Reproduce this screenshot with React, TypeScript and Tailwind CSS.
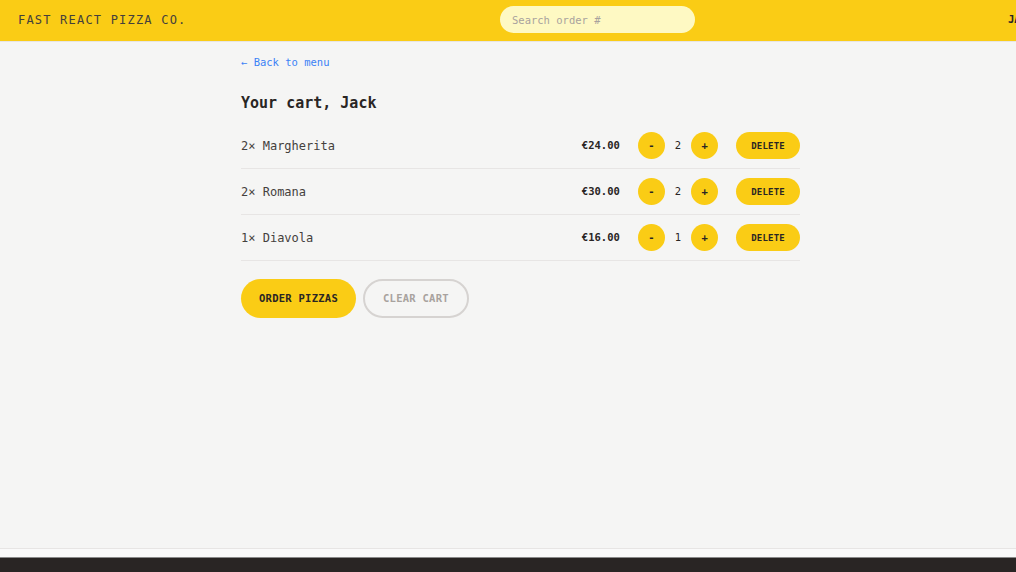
import React from 'react';

const cart = [
  { id: 1, name: 'Margherita', quantity: 2, price: 24 },
  { id: 2, name: 'Romana', quantity: 2, price: 30 },
  { id: 3, name: 'Diavola', quantity: 1, price: 16 },
];

const CartItem: React.FC<{ name: string; quantity: number; price: number }> = ({ name, quantity, price }) => (
  <li className="flex items-center justify-between py-[9px]">
    <p className="text-[12px] leading-[18px] text-[#44403c]">
      {quantity}&times; {name}
    </p>
    <div className="flex items-center gap-[18px]">
      <p className="text-[10.5px] font-bold leading-[15px]">€{price.toFixed(2)}</p>
      <div className="flex items-center gap-[10px]">
        <button className="flex h-[27px] w-[27px] items-center justify-center rounded-full bg-[#facc15] text-[10.5px] font-semibold">
          -
        </button>
        <span className="text-[10.5px] font-medium leading-[15px]">{quantity}</span>
        <button className="flex h-[27px] w-[27px] items-center justify-center rounded-full bg-[#facc15] text-[10.5px] font-semibold">
          +
        </button>
      </div>
      <button className="h-[27px] rounded-full bg-[#facc15] px-[15px] text-[9px] font-semibold uppercase leading-[12px] tracking-wide">
        Delete
      </button>
    </div>
  </li>
);

export default function App() {
  return (
    <div className="flex h-[572px] flex-col overflow-hidden bg-[#f5f5f4] font-['DejaVu_Sans_Mono',monospace] text-[#292524]">
      <header className="flex h-[42px] shrink-0 items-center overflow-hidden border-b border-[#e7e5e4] bg-[#facc15] pb-[2px] pl-[18px] uppercase">
        <span className="w-[482px] shrink-0 text-[12px] tracking-widest text-[#44403c]">Fast React Pizza Co.</span>
        <input
          className="h-[27px] w-[195px] shrink-0 rounded-full bg-[#fef9c3] px-[12px] text-[10.5px] placeholder:text-[#a8a29e] focus:outline-none"
          placeholder="Search order #"
        />
        <span className="ml-[313px] shrink-0 text-[10.5px] font-semibold">Jack</span>
      </header>

      <main className="flex-1">
        <div className="ml-[241px] w-[559px] pt-[13px]">
          <a className="block text-[10.5px] leading-[15px] text-[#3b82f6]">&larr; Back to menu</a>
          <h2 className="mt-[23px] text-[15px] font-semibold leading-[21px]">Your cart, Jack</h2>
          <ul className="mt-[9px] divide-y divide-[#e7e5e4] border-b border-[#e7e5e4]">
            {cart.map((item) => (
              <CartItem key={item.id} name={item.name} quantity={item.quantity} price={item.price} />
            ))}
          </ul>
          <div className="mt-[18px] flex gap-[7px]">
            <button className="h-[39px] rounded-full bg-[#facc15] px-[18px] text-[10.5px] font-semibold uppercase leading-[15px] tracking-wide">
              Order pizzas
            </button>
            <button className="h-[39px] rounded-full border-2 border-[#d6d3d1] px-[18px] text-[10.5px] font-semibold uppercase leading-[15px] tracking-wide text-[#a8a29e]">
              Clear cart
            </button>
          </div>
        </div>
      </main>

      <div className="h-px shrink-0 bg-[#e7e5e4]" />
      <div className="h-[8px] shrink-0 bg-[#fafafa]" />
      <div className="h-px shrink-0 bg-[#8a8a8a]" />
      <footer className="h-[14px] shrink-0 bg-[#292524]" />
    </div>
  );
}
